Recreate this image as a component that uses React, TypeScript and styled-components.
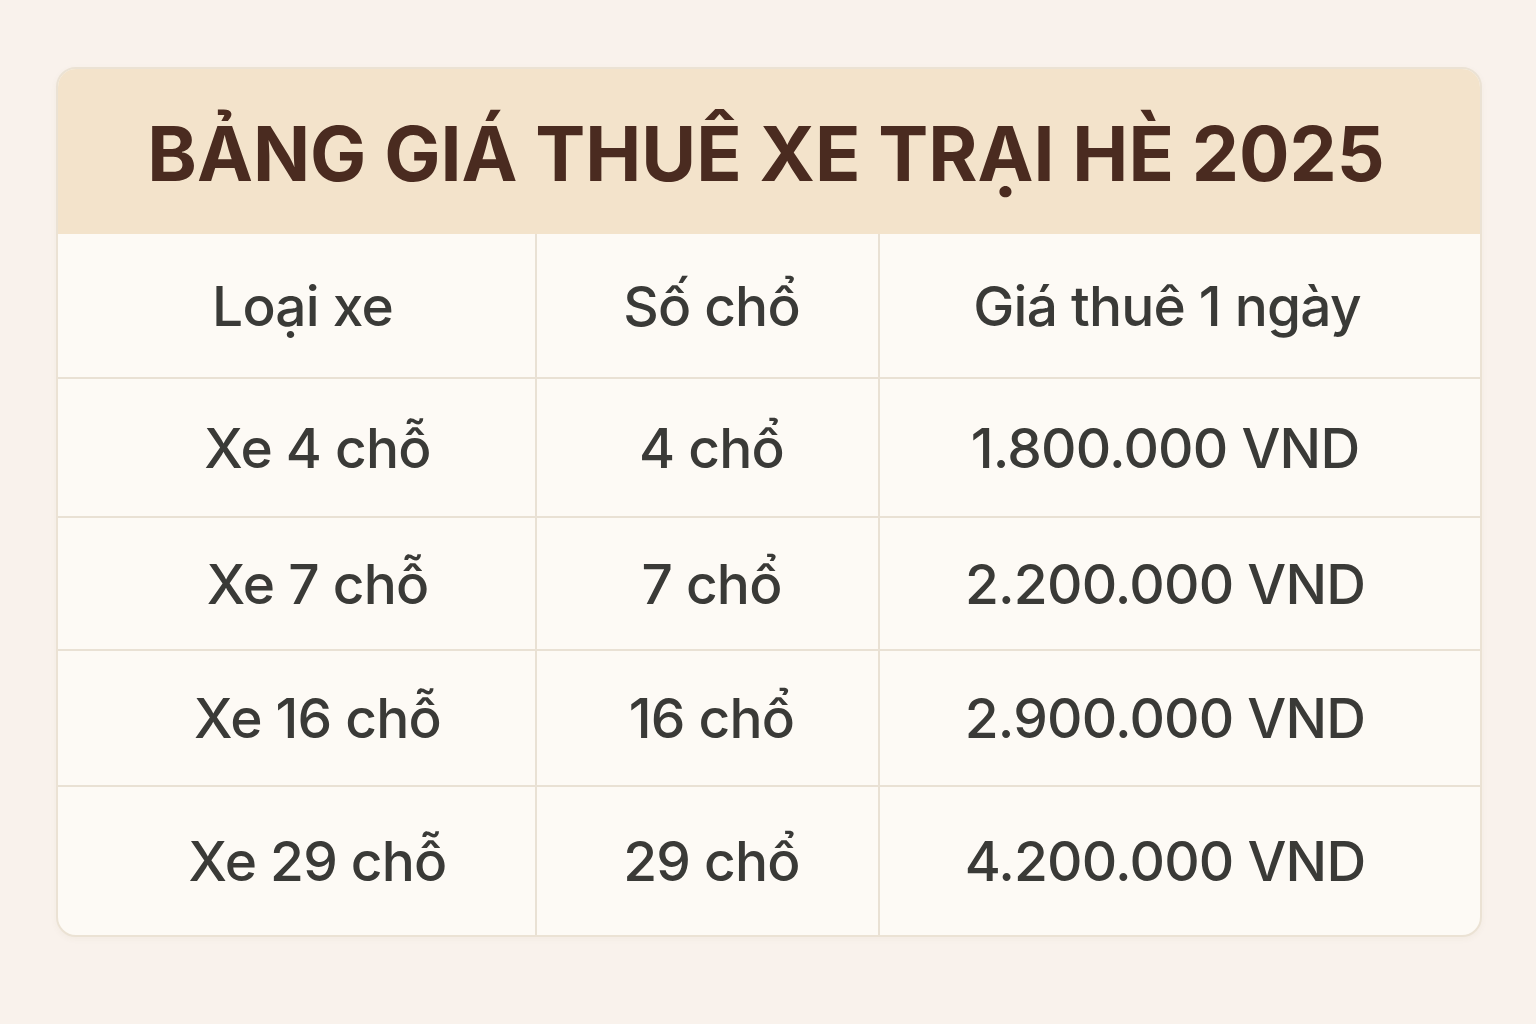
import React from "react";
import styled, { createGlobalStyle } from "styled-components";

const rows = [
    ["Xe 4 chỗ", "4 chổ", "1.800.000 VND"],
    ["Xe 7 chỗ", "7 chổ", "2.200.000 VND"],
    ["Xe 16 chỗ", "16 chổ", "2.900.000 VND"],
    ["Xe 29 chỗ", "29 chổ", "4.200.000 VND"],
];
const rowHeights = [137, 131, 134, 148];
const shifts = [42, 8, -30];

export default function App() {
    return (
        <>
            <GlobalStyle />
            <Page>
                <Card>
                    <Title>BẢNG GIÁ THUÊ XE TRẠI HÈ 2025</Title>
                    <Table>
                        <Row $height={143}>
                            <Cell $shift={12}>Loại xe</Cell>
                            <Cell $shift={shifts[1]}>Số chổ</Cell>
                            <Cell $shift={-26}>Giá thuê 1 ngày</Cell>
                        </Row>
                        {rows.map((r, i) => (
                            <Row key={r[0]} $height={rowHeights[i]}>
                                {r.map((c, j) => (
                                    <Cell key={c} $shift={shifts[j]}>{c}</Cell>
                                ))}
                            </Row>
                        ))}
                    </Table>
                </Card>
            </Page>
        </>
    );
}

const GlobalStyle = createGlobalStyle`
    html, body {
        margin: 0;
        background: #f9f2ec;
    }
`;
const Page = styled.div`
    width: 1536px;
    height: 1024px;
    box-sizing: border-box;
    padding: 67px 54px 0 56px;
    font-family: Inter, "Noto Sans", sans-serif;
`;
const Card = styled.div`
    width: 1426px;
    border: 2px solid #ebe2d4;
    border-radius: 20px;
    overflow: hidden;
    background: #fdfaf5;
    box-sizing: border-box;
    box-shadow: 0 2px 6px rgba(120, 90, 50, 0.05);
`;
const Title = styled.h1`
    margin: 0;
    height: 165px;
    display: flex;
    align-items: center;
    justify-content: center;
    background: #f3e3cb;
    color: #4a2b20;
    font-size: 75px;
    font-weight: 700;
    letter-spacing: 0;
    padding: 4px 6px 0 0;
    box-sizing: border-box;
`;
const Table = styled.div`
    display: flex;
    flex-direction: column;
`;
const Row = styled.div<{ $height: number }>`
    display: grid;
    grid-template-columns: 477px 343px 1fr;
    height: ${(p) => p.$height}px;
    border-top: 2px solid #e9e1d4;
    &:first-child {
        border-top: none;
    }
`;
const Cell = styled.div<{ $shift: number }>`
    display: flex;
    align-items: center;
    justify-content: center;
    padding-left: ${(p) => Math.max(p.$shift, 0)}px;
    padding-right: ${(p) => Math.max(-p.$shift, 0)}px;
    font-size: 55px;
    font-weight: 500;
    letter-spacing: -0.8px;
    color: #3a3a37;
    & + & {
        border-left: 2px solid #e9e1d4;
    }
`;
